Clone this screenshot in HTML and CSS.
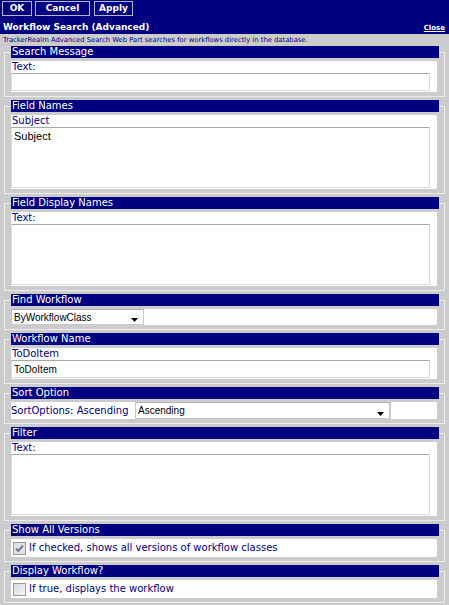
FILE: index.html
```html
<!DOCTYPE html>
<html>
<head>
<meta charset="utf-8">
<link rel="stylesheet" href="styles.css">
</head>
<body>
<div class="header">
  <div class="toolbar">
    <button class="btn btn-ok">OK</button>
    <button class="btn btn-cancel">Cancel</button>
    <button class="btn btn-apply">Apply</button>
  </div>
  <div class="titlebar">
    <span class="title">Workflow Search (Advanced)</span>
    <a class="close" href="#">Close</a>
  </div>
</div>
<div class="desc">TrackerRealm Advanced Search Web Part searches for workflows directly in the database.</div>
<div class="panel">
  <fieldset class="group">
    <legend class="group-title">Search Message</legend>
    <div class="box">
      <div class="label">Text:</div>
      <input class="text" type="text">
    </div>
  </fieldset>
  <fieldset class="group">
    <legend class="group-title">Field Names</legend>
    <div class="box">
      <div class="label">Subject</div>
      <textarea class="area">Subject</textarea>
    </div>
  </fieldset>
  <fieldset class="group">
    <legend class="group-title">Field Display Names</legend>
    <div class="box">
      <div class="label">Text:</div>
      <textarea class="area"></textarea>
    </div>
  </fieldset>
  <fieldset class="group">
    <legend class="group-title">Find Workflow</legend>
    <div class="box box-row">
      <div class="select-wrap select-find">
        <select class="select"><option>ByWorkflowClass</option></select>
        <svg class="arrow" width="7" height="5" viewBox="0 0 7 5"><polygon points="0,0 7,0 3.5,4" fill="#000"/></svg>
      </div>
    </div>
  </fieldset>
  <fieldset class="group">
    <legend class="group-title">Workflow Name</legend>
    <div class="box">
      <div class="label">ToDoItem</div>
      <input class="text" type="text" value="ToDoItem">
    </div>
  </fieldset>
  <fieldset class="group">
    <legend class="group-title">Sort Option</legend>
    <div class="sort-row">
      <div class="sort-label">SortOptions: Ascending</div>
      <div class="select-wrap select-sort">
        <select class="select"><option>Ascending</option></select>
        <svg class="arrow" width="7" height="5" viewBox="0 0 7 5"><polygon points="0,0 7,0 3.5,4" fill="#000"/></svg>
      </div>
      <div class="sort-fill"></div>
    </div>
  </fieldset>
  <fieldset class="group">
    <legend class="group-title">Filter</legend>
    <div class="box">
      <div class="label">Text:</div>
      <textarea class="area"></textarea>
    </div>
  </fieldset>
  <fieldset class="group">
    <legend class="group-title">Show All Versions</legend>
    <div class="box check-row">
      <span class="check check-on"><svg width="11" height="11" viewBox="0 0 11 11"><path d="M2 5.5 L4.3 8 L9 2.5" fill="none" stroke="#6a7aa6" stroke-width="2"/></svg></span>
      <span class="check-label">If checked, shows all versions of workflow classes</span>
    </div>
  </fieldset>
  <fieldset class="group group-last">
    <legend class="group-title">Display Workflow?</legend>
    <div class="box check-row">
      <span class="check"></span>
      <span class="check-label">If true, displays the workflow</span>
    </div>
  </fieldset>
</div>
</body>
</html>
```
FILE: styles.css
```css
html, body {
  margin: 0;
  padding: 0;
}
body {
  background: #cccccc;
  font-family: "DejaVu Sans", Verdana, sans-serif;
  width: 449px;
  height: 605px;
  overflow: hidden;
}
.header {
  background: #000080;
  height: 34px;
}
.toolbar {
  display: flex;
  padding: 1px 0 0 2px;
  height: 16px;
  box-sizing: border-box;
}
.btn {
  height: 15px;
  margin: 0 3px 0 0;
  padding: 0;
  border: 1px solid #b4b4c4;
  background: #000080;
  color: #ffffff;
  font: bold 9px/13px "DejaVu Sans", Verdana, sans-serif;
  box-sizing: border-box;
  text-align: center;
}
.btn-ok { width: 30px; }
.btn-cancel { width: 55px; }
.btn-apply { width: 39px; margin-left: 1px; }
.titlebar {
  display: flex;
  justify-content: space-between;
  align-items: baseline;
  padding: 5px 4px 0 3px;
  height: 18px;
  box-sizing: border-box;
}
.title {
  color: #ffffff;
  font: bold 9px/12px "DejaVu Sans", Verdana, sans-serif;
}
.close {
  color: #ffffff;
  font: bold 7px/12px "DejaVu Sans", Verdana, sans-serif;
  text-decoration: underline;
}
.desc {
  height: 12px;
  padding-left: 3px;
  font-size: 6.8px;
  line-height: 12px;
  color: #000080;
  white-space: nowrap;
}
.panel {
  padding: 0 4px;
}
.group {
  margin: 0 0 3px;
  padding: 0 5px 4px 6px;
  border: 1px solid #ececec;
  min-width: 0;
}
.group-last {
  margin-bottom: 0;
}
.group-title {
  display: block;
  box-sizing: border-box;
  width: 100%;
  height: 12px;
  padding: 0 0 0 1px;
  background: #000080;
  color: #ffffff;
  font-size: 10px;
  line-height: 12px;
}
.box {
  margin-top: 3px;
  width: 426px;
  background: #ffffff;
  padding-bottom: 1px;
}
.label {
  height: 12px;
  font-size: 10px;
  line-height: 12px;
  color: #000080;
  padding-left: 1px;
}
.text {
  display: block;
  box-sizing: border-box;
  width: 419px;
  height: 18px;
  margin: 0;
  padding: 0 2px;
  border: 1px solid #dcdcdc;
  border-top-color: #a8a8a8;
  font: 10px "Liberation Sans", Arial, sans-serif;
  color: #000;
  background: #fff;
  outline: none;
}
.area {
  display: block;
  box-sizing: border-box;
  width: 419px;
  height: 61px;
  margin: 0;
  padding: 2px 2px;
  border: 1px solid #dcdcdc;
  border-top-color: #a8a8a8;
  font: 11px/13px "Liberation Sans", Arial, sans-serif;
  color: #000;
  resize: none;
  background: #fff;
  outline: none;
}
.box-row {
  padding-bottom: 0;
  height: 16px;
}
.select-wrap {
  position: relative;
  height: 16px;
}
.select-find {
  width: 133px;
}
.select {
  display: block;
  appearance: none;
  -webkit-appearance: none;
  box-sizing: border-box;
  width: 100%;
  height: 16px;
  margin: 0;
  padding: 0 0 0 2px;
  border: 1px solid #c8c8c8;
  border-top-color: #b4b4b4;
  border-radius: 0;
  background: #fff;
  font: 10px "Liberation Sans", Arial, sans-serif;
  color: #000;
  outline: none;
}
.arrow {
  position: absolute;
  right: 6px;
  top: 9px;
}
.sort-row {
  display: flex;
  margin-top: 3px;
  width: 426px;
  height: 17px;
}
.sort-label {
  width: 124px;
  background: #fff;
  font-size: 10px;
  line-height: 17px;
  color: #000080;
  white-space: nowrap;
}
.select-sort {
  width: 255px;
  height: 17px;
}
.select-sort .select {
  height: 17px;
}
.select-sort .arrow {
  top: 10px;
}
.sort-fill {
  flex: 1;
  margin-left: 1px;
  background: #fff;
}
.check-row {
  display: flex;
  align-items: center;
  height: 18px;
  padding-bottom: 0;
}
.check {
  display: flex;
  align-items: center;
  justify-content: center;
  width: 13px;
  height: 13px;
  box-sizing: border-box;
  margin: 0 3px 0 2px;
  border: 1px solid #9a9a9a;
  background: linear-gradient(135deg, #dcdcdc, #f4f4f4);
}
.check-on {
  background: #e2e2e2;
}
.check-label {
  font-size: 10px;
  line-height: 12px;
  color: #000080;
  white-space: nowrap;
}
```
